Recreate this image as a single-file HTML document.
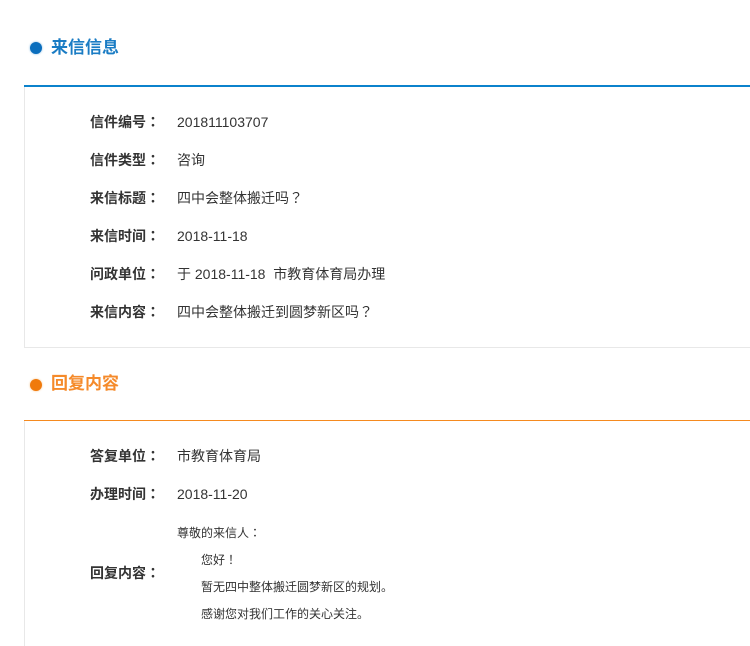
<!DOCTYPE html>
<html><head><meta charset="utf-8"><style>
body{margin:0;width:750px;height:646px;background:#fff;position:relative;overflow:hidden;font-family:"Liberation Sans","Noto Sans CJK SC",sans-serif;color:#333}
.a{position:absolute;white-space:nowrap}
.c{font-family:"Noto Sans CJK TC",sans-serif}
.dot{position:absolute;width:12px;height:12px;border-radius:50%}
.t{font-size:17px;font-weight:bold;line-height:20px}
.l{font-size:14px;font-weight:bold;line-height:18px;right:590px;text-align:right}
.v{font-size:14px;line-height:18px;left:177px}
.r{font-size:12px;line-height:16px}
</style></head><body>
<div class="dot" style="left:30px;top:42px;background:#0a6ebd;box-shadow:0 0 2px #7fb6e0"></div>
<div class="a t" style="left:51px;top:38px;color:#1a7cc4">来信信息</div>
<div class="a" style="left:24px;top:85px;width:726px;height:2px;background:#0b82cc"></div>
<div class="a" style="left:24px;top:87px;width:1px;height:260px;background:#e8e8e8"></div>
<div class="a" style="left:24px;top:347px;width:726px;height:1px;background:#e8e8e8"></div>
<div class="a l" style="top:113px">信件编号<span class="c">：</span></div><div class="a v" style="top:113px">201811103707</div>
<div class="a l" style="top:151px">信件类型<span class="c">：</span></div><div class="a v" style="top:151px">咨询</div>
<div class="a l" style="top:189px">来信标题<span class="c">：</span></div><div class="a v" style="top:189px">四中会整体搬迁吗<span class="c">？</span></div>
<div class="a l" style="top:227px">来信时间<span class="c">：</span></div><div class="a v" style="top:227px">2018-11-18</div>
<div class="a l" style="top:265px">问政单位<span class="c">：</span></div><div class="a v" style="top:265px">于 2018-11-18&nbsp; 市教育体育局办理</div>
<div class="a l" style="top:303px">来信内容<span class="c">：</span></div><div class="a v" style="top:303px">四中会整体搬迁到圆梦新区吗<span class="c">？</span></div>
<div class="dot" style="left:30px;top:379px;background:#f07a0c;box-shadow:0 0 2px #f5c48f"></div>
<div class="a t" style="left:51px;top:374px;color:#f58a2a">回复内容</div>
<div class="a" style="left:24px;top:420px;width:726px;height:1px;background:#f58a1f"></div>
<div class="a" style="left:24px;top:421px;width:1px;height:225px;background:#e8e8e8"></div>
<div class="a l" style="top:447px">答复单位<span class="c">：</span></div><div class="a v" style="top:447px">市教育体育局</div>
<div class="a l" style="top:485px">办理时间<span class="c">：</span></div><div class="a v" style="top:485px">2018-11-20</div>
<div class="a l" style="top:564px">回复内容<span class="c">：</span></div>
<div class="a r" style="left:177px;top:525px">尊敬的来信人<span class="c">：</span></div>
<div class="a r" style="left:201px;top:552px">您好<span class="c">！</span></div>
<div class="a r" style="left:201px;top:579px">暂无四中整体搬迁圆梦新区的规划。</div>
<div class="a r" style="left:201px;top:606px">感谢您对我们工作的关心关注。</div>
</body></html>
